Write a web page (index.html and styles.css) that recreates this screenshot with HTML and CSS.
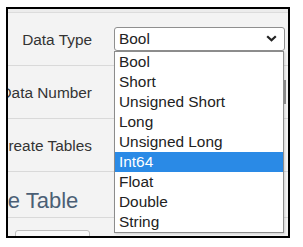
FILE: index.html
```html
<!DOCTYPE html>
<html>
<head>
    <title>Data Type</title>
    <meta charset="utf-8">
    <link rel="stylesheet" href="styles.css">
</head>
<body>
    <div class="frame">
        <div class="top-strip"></div>

        <!-- Form rows -->
        <div class="form-row">
            <div class="label-cell"><span>Data Type</span></div>
            <div class="value-cell">
                <div class="select-box">
                    <span>Bool</span>
                    <svg class="chevron" width="11" height="7" viewBox="0 0 11 7">
                        <path d="M1.2 1.2 L5.5 5.3 L9.8 1.2" fill="none" stroke="#222" stroke-width="2.2"/>
                    </svg>
                </div>
            </div>
        </div>
        <div class="form-row">
            <div class="label-cell"><span>Data Number</span></div>
            <div class="value-cell"></div>
        </div>
        <div class="form-row">
            <div class="label-cell"><span>Create Tables</span></div>
            <div class="value-cell"></div>
        </div>

        <div class="section-title">Create Table</div>
        <div class="button-row">
            <div class="ghost-button"></div>
        </div>

        <!-- Open dropdown list -->
        <ul class="dropdown">
            <li>Bool</li>
            <li>Short</li>
            <li>Unsigned Short</li>
            <li>Long</li>
            <li>Unsigned Long</li>
            <li class="active">Int64</li>
            <li>Float</li>
            <li>Double</li>
            <li>String</li>
            <div class="scroll-thumb"></div>
        </ul>
    </div>
</body>
</html>
```

FILE: styles.css
```css
body {
    margin: 0;
    background: #ffffff;
    font-family: "Liberation Sans", Arial, Helvetica, sans-serif;
    font-size: 15.4px;
    color: #333333;
}
/* black frame around the cropped page */
.frame {
    position: relative;
    margin: 7px 0 0 6px;
    width: 280px;
    height: 227px;
    border: 2px solid #000000;
    background: #f3f3f3;
    overflow: hidden;
}
.top-strip {
    height: 3px;
    background: #ececec;
    border-bottom: 1px solid #dcdcdc;
}
.form-row {
    display: grid;
    grid-template-columns: 84px 1fr;
    column-gap: 22px;
    height: 52px;
    border-bottom: 1px solid #d9d9d9;
}
.label-cell {
    display: flex;
    justify-content: flex-end;
    align-items: center;
    white-space: nowrap;
    padding-top: 2px;
}
.value-cell {
    display: flex;
    align-items: center;
    padding-right: 3px;
}
.select-box {
    flex: 1;
    height: 22px;
    margin-top: -1px;
    display: flex;
    align-items: center;
    justify-content: space-between;
    padding: 0 7px 0 4px;
    background: #ffffff;
    border: 1px solid #8f8f8f;
    border-radius: 3px;
    color: #222222;
}
.section-title {
    margin-left: -54px;
    height: 46px;
    display: flex;
    align-items: flex-end;
    padding-bottom: 3px;
    box-sizing: border-box;
    font-size: 22px;
    color: #4b5f75;
    white-space: nowrap;
    border-bottom: 1px solid #d9d9d9;
}
.button-row {
    padding: 12px 0 0 7px;
}
.ghost-button {
    width: 73px;
    height: 30px;
    background: #f9f9f9;
    border: 1px solid #bdbdbd;
    border-radius: 3px;
}
/* the opened list of the select */
.dropdown {
    position: absolute;
    left: 106px;
    top: 42px;
    width: 168px;
    margin: 0;
    padding: 0;
    list-style: none;
    background: #ffffff;
    border: 1px solid #8c8c8c;
    box-shadow: 1px 1px 2px rgba(0, 0, 0, 0.15);
    color: #222222;
}
.dropdown li {
    height: 20px;
    line-height: 20px;
    padding-left: 4px;
    white-space: nowrap;
}
.dropdown .active {
    background: #2a8ae6;
    color: #ffffff;
}
.scroll-thumb {
    position: absolute;
    right: -3px;
    top: 28px;
    width: 2px;
    height: 24px;
    background: #8a8a8a;
}
```
